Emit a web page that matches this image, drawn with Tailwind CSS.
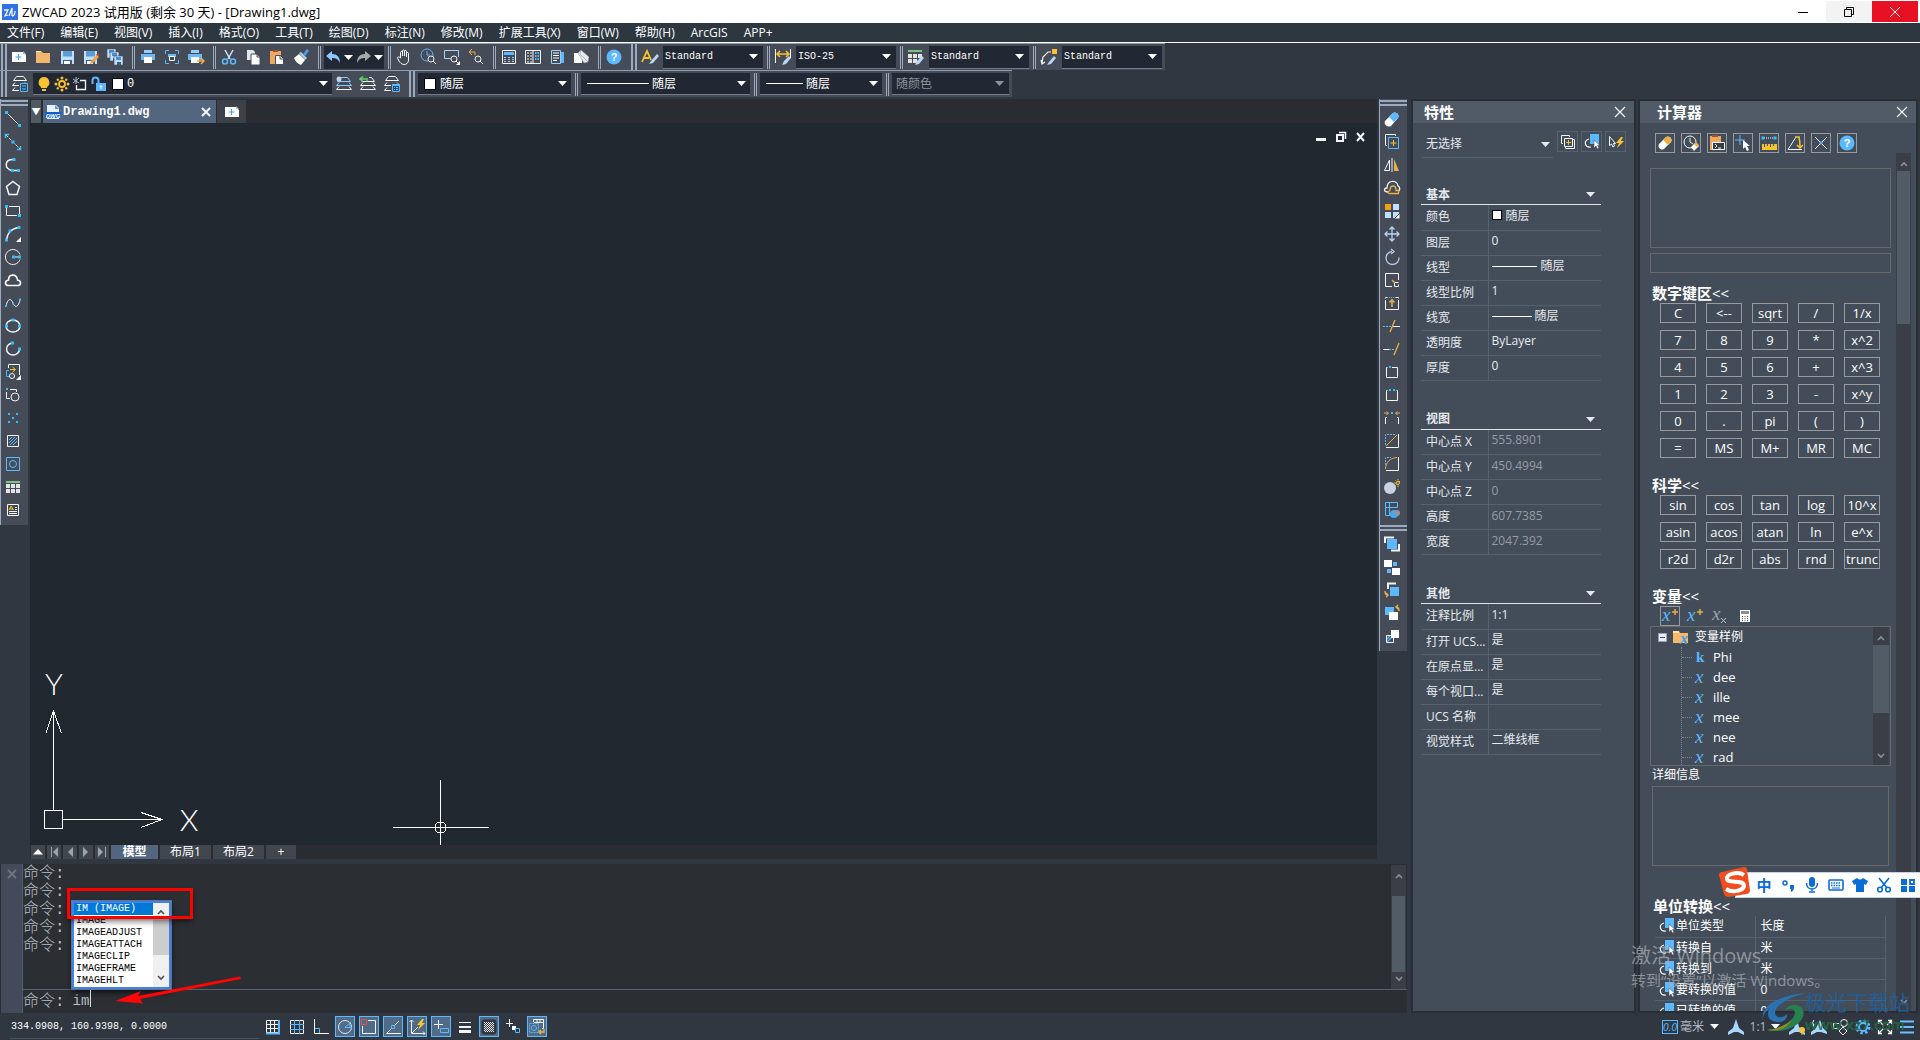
<!DOCTYPE html>
<html lang="zh-CN">
<head>
  <meta charset="UTF-8">
  <title>ZWCAD 2023</title>
  <script src="https://cdn.jsdelivr.net/npm/@tailwindcss/browser@4"></script>
</head>
<body class="relative h-screen flex flex-col overflow-hidden bg-[#303741] text-white text-xs font-['Open_Sans','Noto_Sans_CJK_SC',sans-serif]">

  <!-- Title bar -->
  <header class="h-[23px] shrink-0 flex items-center bg-white text-black">
    <span class="w-[22px] pl-0.5 flex" data-icon="logo"></span>
    <h1 class="flex-1 text-[13px] leading-5">ZWCAD 2023 试用版 (剩余 30 天) - [Drawing1.dwg]</h1>
    <button aria-label="最小化" class="w-[46px] h-[21px] flex items-center justify-center" data-icon="winMin"></button>
    <button aria-label="还原" class="w-[46px] h-[21px] flex items-center justify-center bg-[#f3f3f3]" data-icon="winRestore"></button>
    <button aria-label="关闭" class="w-[46px] h-[21px] mr-0.5 flex items-center justify-center bg-[#e81123]" data-icon="winClose"></button>
  </header>

  <!-- Menu -->
  <nav class="h-5 shrink-0 flex items-center gap-4 pl-[7px] bg-[#2d3740] border-b border-white whitespace-nowrap">
    <a href="#">文件(F)</a>
    <a href="#">编辑(E)</a>
    <a href="#">视图(V)</a>
    <a href="#">插入(I)</a>
    <a href="#">格式(O)</a>
    <a href="#">工具(T)</a>
    <a href="#">绘图(D)</a>
    <a href="#">标注(N)</a>
    <a href="#">修改(M)</a>
    <a href="#">扩展工具(X)</a>
    <a href="#">窗口(W)</a>
    <a href="#">帮助(H)</a>
    <a href="#">ArcGIS</a>
    <a href="#">APP+</a>
  </nav>

  <!-- Standard toolbar -->
  <div class="h-[27px] shrink-0 flex">
    <div class="flex items-center bg-[#454c57] border-t border-[#8f9db0] pr-[3px]">
      <div class="w-[7px] h-full flex gap-0.5 pl-px"><i class="w-0.5 bg-[#9aabc0]"></i><i class="w-0.5 bg-[#9aabc0]"></i></div>
      <div class="flex" data-tools="new open save saveAs saveAll"></div>
      <div class="w-[9px] h-[23px] flex justify-end gap-px pr-px"><i class="w-px bg-[#9aabc0]"></i><i class="w-px bg-[#9aabc0]"></i></div>
      <div class="flex" data-tools="print preview publish"></div>
      <div class="w-[9px] h-[23px] flex justify-end gap-px pr-px"><i class="w-px bg-[#9aabc0]"></i><i class="w-px bg-[#9aabc0]"></i></div>
      <div class="flex" data-tools="cut copy paste brush"></div>
      <div class="w-[9px] h-[23px] flex justify-end gap-px pr-px"><i class="w-px bg-[#9aabc0]"></i><i class="w-px bg-[#9aabc0]"></i></div>
      <div class="ml-0.5 w-[60px] h-[23px] flex items-center justify-around bg-[#222833]">
        <button aria-label="放弃" data-icon="undo"></button>
        <button aria-label="放弃列表" data-icon="down"></button>
        <button aria-label="重做" data-icon="redo"></button>
        <button aria-label="重做列表" data-icon="down"></button>
      </div>
      <div class="w-2 h-[23px] flex justify-end gap-px pr-px"><i class="w-px bg-[#9aabc0]"></i><i class="w-px bg-[#9aabc0]"></i></div>
      <div class="flex" data-tools="hand zoomTime zoomWin zoomPrev"></div>
      <div class="w-[9px] h-[23px] flex justify-end gap-px pr-px"><i class="w-px bg-[#9aabc0]"></i><i class="w-px bg-[#9aabc0]"></i></div>
      <div class="flex" data-tools="calc palette props erasePage"></div>
      <div class="w-[9px] h-[23px] flex justify-end gap-px pr-px"><i class="w-px bg-[#9aabc0]"></i><i class="w-px bg-[#9aabc0]"></i></div>
      <div class="flex" data-tools="help"></div>
      <div class="ml-[5px] h-full flex gap-0.5"><i class="w-0.5 bg-[#9aabc0]"></i><i class="w-0.5 bg-[#9aabc0]"></i></div>
      <div class="w-[26px] flex justify-center" data-icon="textStyle"></div>
      <label class="w-[100px] h-[23px] flex items-center pl-0.5 pr-[5px] bg-[#222833] border-b border-[#737c88]">
        <select aria-label="文字样式" class="flex-1 min-w-0 appearance-none font-['Liberation_Mono',monospace] text-[10px]"><option>Standard</option></select><i data-icon="down"></i>
      </label>
      <div class="w-[7px] h-[23px] flex justify-end gap-px"><i class="w-px bg-[#9aabc0]"></i><i class="w-px bg-[#9aabc0]"></i></div>
      <div class="w-[26px] flex justify-center" data-icon="dimStyle"></div>
      <label class="w-[100px] h-[23px] flex items-center pl-0.5 pr-[5px] bg-[#222833] border-b border-[#737c88]">
        <select aria-label="标注样式" class="flex-1 min-w-0 appearance-none font-['Liberation_Mono',monospace] text-[10px]"><option>ISO-25</option></select><i data-icon="down"></i>
      </label>
      <div class="w-[7px] h-[23px] flex justify-end gap-px"><i class="w-px bg-[#9aabc0]"></i><i class="w-px bg-[#9aabc0]"></i></div>
      <div class="w-[26px] flex justify-center" data-icon="tableStyle"></div>
      <label class="w-[100px] h-[23px] flex items-center pl-0.5 pr-[5px] bg-[#222833] border-b border-[#737c88]">
        <select aria-label="表格样式" class="flex-1 min-w-0 appearance-none font-['Liberation_Mono',monospace] text-[10px]"><option>Standard</option></select><i data-icon="down"></i>
      </label>
      <div class="w-[7px] h-[23px] flex justify-end gap-px"><i class="w-px bg-[#9aabc0]"></i><i class="w-px bg-[#9aabc0]"></i></div>
      <div class="w-[26px] flex justify-center" data-icon="leaderStyle"></div>
      <label class="w-[100px] h-[23px] flex items-center pl-0.5 pr-[5px] bg-[#222833] border-b border-[#737c88]">
        <select aria-label="多重引线样式" class="flex-1 min-w-0 appearance-none font-['Liberation_Mono',monospace] text-[10px]"><option>Standard</option></select><i data-icon="down"></i>
      </label>
    </div>
  </div>

  <!-- Layer toolbar -->
  <div class="h-[27px] mb-0.5 shrink-0 flex">
    <div class="flex items-center bg-[#454c57] border-t border-[#8f9db0] pr-[3px]">
      <div class="w-[7px] h-full flex gap-0.5 pl-px"><i class="w-0.5 bg-[#9aabc0]"></i><i class="w-0.5 bg-[#9aabc0]"></i></div>
      <div class="w-[26px] flex justify-center" data-icon="layers"></div>
      <label class="w-[299px] h-[22px] flex items-center gap-0.5 pl-[3px] pr-1 bg-[#222833] border-b border-[#737c88]">
        <i data-icon="bulb"></i><i data-icon="sun"></i><i data-icon="freeze"></i><i data-icon="lock"></i>
        <i class="size-3 ml-1 mr-px bg-white border border-black"></i>
        <select aria-label="图层" class="flex-1 min-w-0 appearance-none font-['Liberation_Mono',monospace] text-xs"><option>0</option></select><i data-icon="down"></i>
      </label>
      <div class="flex" data-tools="layerCur layerPrev layerState"></div>
      <div class="ml-[5px] h-full flex gap-0.5"><i class="w-0.5 bg-[#9aabc0]"></i><i class="w-0.5 bg-[#9aabc0]"></i></div>
      <label class="ml-[3px] w-[153px] h-[22px] flex items-center gap-1 pl-1.5 pr-1 bg-[#222833] border-b border-[#737c88]">
        <i class="size-3 bg-white border border-black"></i>
        <select aria-label="颜色" class="flex-1 min-w-0 appearance-none"><option>随层</option></select><i data-icon="down"></i>
      </label>
      <div class="w-[7px] h-[23px] flex justify-end gap-px"><i class="w-px bg-[#9aabc0]"></i><i class="w-px bg-[#9aabc0]"></i></div>
      <label class="ml-[3px] w-[169px] h-[22px] flex items-center gap-[3px] pl-1.5 pr-1 bg-[#222833] border-b border-[#737c88]">
        <i class="w-[62px] h-px bg-white"></i>
        <select aria-label="线型" class="flex-1 min-w-0 appearance-none"><option>随层</option></select><i data-icon="down"></i>
      </label>
      <div class="w-[7px] h-[23px] flex justify-end gap-px"><i class="w-px bg-[#9aabc0]"></i><i class="w-px bg-[#9aabc0]"></i></div>
      <label class="ml-[3px] w-[122px] h-[22px] flex items-center gap-[3px] pl-1.5 pr-1 bg-[#222833] border-b border-[#737c88]">
        <i class="w-[37px] h-px bg-white"></i>
        <select aria-label="线宽" class="flex-1 min-w-0 appearance-none"><option>随层</option></select><i data-icon="down"></i>
      </label>
      <div class="w-[7px] h-[23px] flex justify-end gap-px"><i class="w-px bg-[#9aabc0]"></i><i class="w-px bg-[#9aabc0]"></i></div>
      <label class="ml-[3px] w-[117px] h-[22px] flex items-center pl-1 pr-[5px] bg-[#222833] border-b border-[#737c88] text-[#8d939c]">
        <select aria-label="打印样式" class="flex-1 min-w-0 appearance-none"><option>随颜色</option></select><i data-icon="down"></i>
      </label>
    </div>
  </div>

  <main class="flex-1 min-h-0 flex gap-0.5 pr-0.5">
    <div class="flex-1 min-w-0 flex flex-col pr-0.5">
      <div class="flex-1 min-h-0 flex gap-0.5">

        <!-- Draw toolbar -->
        <div class="w-7 self-start bg-[#454c57] border-l border-[#9aabc0] pb-1">
          <div class="pt-px flex flex-col gap-0.5"><i class="h-0.5 bg-[#9aabc0]"></i><i class="h-0.5 bg-[#9aabc0]"></i></div>
          <div class="pt-px flex flex-col" data-side="line xline pline polygon rect arc circle cloud spline ellipse ellipseArc insert block point hatch region table mtext"></div>
        </div>

        <!-- Drawing area -->
        <section class="flex-1 min-w-0 flex flex-col bg-[#2a2c31]">
          <div class="h-6 pt-px shrink-0 flex gap-0.5 pl-px">
            <button aria-label="文档列表" class="w-2.5 bg-[#505a63] flex items-center justify-center text-[9px]">▼</button>
            <div class="w-[173px] flex items-center gap-0.5 pl-0.5 pr-1 bg-[#536680] font-['Liberation_Mono',monospace] font-bold">
              <i data-icon="dwg"></i><span class="flex-1">Drawing1.dwg</span><button aria-label="关闭图纸" data-icon="tabClose"></button>
            </div>
            <button aria-label="新建图纸" class="-ml-px w-[29px] flex items-center justify-center bg-[#3b4049]" data-icon="new"></button>
          </div>
          <div class="relative flex-1 min-h-0 bg-[#222830] overflow-hidden">
            <div class="absolute top-1.5 right-2 flex gap-1">
              <button aria-label="最小化图纸" data-icon="docMin"></button>
              <button aria-label="还原图纸" data-icon="docRestore"></button>
              <button aria-label="关闭图纸窗口" data-icon="docClose"></button>
            </div>
            <svg class="absolute left-0 bottom-0" width="480" height="180" viewBox="0 0 480 180" fill="none" stroke="#fff" shape-rendering="crispEdges">
              <path d="M14.500 145.500h18v18h-18zM23.500 145V46M33 154.500h99"/>
              <path d="M16 68L23.500 46L31.500 68M111 147.500L132 154.500L111 162.500"/>
              <path d="M410.500 115v42M410.500 168v12M363 162.500h42M416 162.500h43M405.500 159.500l2-2h6l2 2v6l-2 2h-6l-2-2zM410.500 157v11M405 162.500h11"/>
              <text x="24" y="30" text-anchor="middle" class="font-['Lato'] font-light text-[30px]" fill="#fff" stroke="none">Y</text>
              <text x="159" y="166" text-anchor="middle" class="font-['Lato'] font-light text-[30px]" fill="#fff" stroke="none">X</text>
            </svg>
          </div>
          <div class="h-3.5 shrink-0 flex gap-0.5 pl-px leading-3">
            <button aria-label="展开" class="w-3.5 bg-[#41464f] flex items-center justify-center" data-icon="navUp"></button>
            <button aria-label="第一个" class="w-3.5 bg-[#41464f] flex items-center justify-center" data-icon="navFirst"></button>
            <button aria-label="上一个" class="w-3.5 bg-[#41464f] flex items-center justify-center" data-icon="navPrev"></button>
            <button aria-label="下一个" class="w-3.5 bg-[#41464f] flex items-center justify-center" data-icon="navNext"></button>
            <button aria-label="最后一个" class="w-3.5 bg-[#41464f] flex items-center justify-center" data-icon="navLast"></button>
            <button class="w-[47px] bg-[#536680] font-bold">模型</button>
            <button class="w-[51px] bg-[#41464f]">布局1</button>
            <button class="w-[51px] bg-[#41464f]">布局2</button>
            <button class="w-[30px] bg-[#41464f]">+</button>
          </div>
        </section>

        <!-- Modify toolbar -->
        <div class="w-7 self-start bg-[#454c57] border-l border-[#9aabc0] pb-1">
          <div class="pt-px flex flex-col gap-0.5"><i class="h-0.5 bg-[#9aabc0]"></i><i class="h-0.5 bg-[#9aabc0]"></i></div>
          <div class="pt-px flex flex-col" data-side="erase copyObj mirror offset array move rotate scale stretch trim extend breakPt breakTwo join chamfer fillet explode blockEdit"></div>
          <div class="pt-1 flex flex-col gap-0.5"><i class="h-0.5 bg-[#9aabc0]"></i><i class="h-0.5 bg-[#9aabc0]"></i></div>
          <div class="flex flex-col pt-px" data-side="front back above under hatchBack"></div>
        </div>
      </div>

      <!-- Command window -->
      <section class="relative mt-[5px] h-[149px] shrink-0 flex bg-[#2b2e33] pl-px text-[#b9bec6]">
        <div class="w-[22px] shrink-0 bg-[#434b5a] border-r border-[#56616d] flex justify-center pt-1 text-[#6c7480]"><button aria-label="关闭命令行" class="h-3" data-icon="cmdClose"></button></div>
        <div class="flex-1 min-w-0 flex flex-col text-base font-['Liberation_Mono','Noto_Sans_CJK_SC',monospace]">
          <div class="flex-1 min-h-0 flex">
            <div class="flex-1 pt-px leading-[18px] font-light">
              <p>命令:</p>
              <p>命令:</p>
              <p>命令:</p>
              <p>命令:</p>
              <p>命令:</p>
            </div>
            <div class="w-[15px] mt-px mr-px bg-[#3b3e46] flex flex-col items-center px-px text-[#8a919b]">
              <i class="h-[31px] pt-2" data-icon="chevUp"></i>
              <i class="w-full flex-1 bg-[#525c67]"></i>
              <i class="h-[17px] pt-1" data-icon="chevDown"></i>
            </div>
          </div>
          <label class="h-6 flex items-center gap-2 border-t border-[#56616d] font-light">命令:<input aria-label="命令" value="im" class="flex-1 text-[14px] outline-none"></label>
        </div>

        <!-- Suggestions -->
        <div class="absolute left-[71px] top-9 w-[101px] h-[90px] border border-[#6b7078] bg-[#3b82f6] p-0.5 shadow-md shadow-black/50">
          <div class="h-full flex bg-white text-black font-['Liberation_Mono',monospace] text-[10px] leading-3">
            <ul class="flex-1 overflow-hidden">
              <li class="h-3 pl-0.5 bg-[#0078d7] text-white whitespace-pre">IM (IMAGE)</li>
              <li class="pl-0.5">IMAGE</li>
              <li class="pl-0.5">IMAGEADJUST</li>
              <li class="pl-0.5">IMAGEATTACH</li>
              <li class="pl-0.5">IMAGECLIP</li>
              <li class="pl-0.5">IMAGEFRAME</li>
              <li class="pl-0.5">IMAGEHLT</li>
            </ul>
            <div class="w-4 bg-[#f0f0f0] flex flex-col items-center text-[#505050]">
              <i class="h-[17px] pt-1.5" data-icon="chevUp"></i>
              <i class="w-full h-[35px] bg-[#cdcdcd]"></i>
              <i class="mt-auto h-4 pt-1" data-icon="chevDown"></i>
            </div>
          </div>
        </div>
        <i class="absolute left-[90px] top-[126px] w-px h-[17px] bg-[#d5d8dc]"></i>
        <div class="absolute left-[67px] top-6 w-[126px] h-[31px] border-3 border-[#ff0000] shadow-md shadow-black/40"></div>
        <svg class="absolute left-[113px] top-[110px]" width="132" height="34" viewBox="0 0 132 34" fill="#ff0505"><path d="M2 27L28 17L25 22L127 2.500L128 5L27 25L30 29.500Z"/></svg>
      </section>
    </div>

    <!-- Properties -->
    <aside class="w-[225px] shrink-0 flex flex-col border-2 border-[#2a2d33] bg-[#434d59] text-[#e6eaee]">
      <div class="h-[22px] shrink-0 flex items-center pl-[11px] pr-2 bg-[#505b67] text-white">
        <h2 class="flex-1 text-[15px] leading-5 font-bold">特性</h2><button aria-label="关闭特性" data-icon="close"></button>
      </div>
      <div class="pt-2 pl-[9px] pr-2 flex gap-[3px]">
        <label class="flex-1 mr-px h-[27px] flex items-center pl-1 pr-[3px] border-b border-[#56616d]">
          <select aria-label="选择" class="flex-1 min-w-0 appearance-none"><option>无选择</option></select><i data-icon="down"></i>
        </label>
        <button aria-label="切换 PICKADD" class="size-[21px] flex items-center justify-center border border-[#56616d]" data-icon="pickAdd"></button>
        <button aria-label="选择对象" class="size-[21px] flex items-center justify-center border border-[#56616d]" data-icon="pick"></button>
        <button aria-label="快速选择" class="size-[21px] flex items-center justify-center border border-[#56616d]" data-icon="quick"></button>
      </div>
      <div id="props" class="pl-2 pr-[33px]"></div>
    </aside>

    <!-- Calculator -->
    <aside class="w-[280px] shrink-0 flex flex-col border-2 border-[#2a2d33] bg-[#434d59]">
      <div class="h-[22px] shrink-0 flex items-center pl-[17px] pr-2 bg-[#505b67]">
        <h2 class="flex-1 text-[15px] leading-5 font-bold">计算器</h2><button aria-label="关闭计算器" data-icon="close"></button>
      </div>
      <div class="flex-1 min-h-0 flex pr-[5px]">
        <div class="flex-1 min-w-0 pt-2.5 pl-2.5 pr-[5px] overflow-hidden">
          <div id="calcTools" class="flex gap-1.5 pl-[5px]"></div>
          <textarea aria-label="历史" class="block mt-[15px] w-full h-20 resize-none border border-[#68686a]"></textarea>
          <input aria-label="表达式" class="block mt-[5px] w-full h-5 border border-[#68686a]">
          <h3 class="mt-2.5 h-5 pl-0.5 text-[15px] leading-5 font-bold">数字键区<span class="font-normal">&lt;&lt;</span></h3>
          <div class="grid grid-cols-5 gap-x-2.5 gap-y-[7px] pl-2.5 pr-[11px]" data-keys="C <-- sqrt / 1/x 7 8 9 * x^2 4 5 6 + x^3 1 2 3 - x^y 0 . pi ( ) = MS M+ MR MC"></div>
          <h3 class="mt-[17px] h-5 pl-0.5 text-[15px] leading-5 font-bold">科学<span class="font-normal">&lt;&lt;</span></h3>
          <div class="grid grid-cols-5 gap-x-2.5 gap-y-[7px] pl-2.5 pr-[11px]" data-keys="sin cos tan log 10^x asin acos atan ln e^x r2d d2r abs rnd trunc"></div>
          <h3 class="mt-[17px] h-5 pl-0.5 text-[15px] leading-5 font-bold">变量<span class="font-normal">&lt;&lt;</span></h3>
          <div class="flex gap-[5px] pl-2.5">
            <button aria-label="新建变量" class="size-5 flex items-center justify-center border border-[#9a9a9c]" data-icon="varNew"></button>
            <button aria-label="编辑变量" class="size-5 flex items-center justify-center" data-icon="varNew"></button>
            <button aria-label="删除变量" class="size-5 flex items-center justify-center" data-icon="varDel"></button>
            <button aria-label="计算器" class="size-5 flex items-center justify-center" data-icon="calcMini"></button>
          </div>
          <div class="h-[140px] flex border border-[#68686a] overflow-hidden">
            <ul class="flex-1 leading-5">
              <li class="flex items-center gap-1.5 pl-[7px]"><i data-icon="minus"></i><i data-icon="folderX"></i>变量样例</li>
              <li>
                <ul id="vars" class="ml-[30px] border-l border-dotted border-[#7b838d]"></ul>
              </li>
            </ul>
            <div class="w-4 mr-px bg-[#3b3e46] flex flex-col items-center text-[#8a919b]">
              <i class="h-[18px] pt-2" data-icon="chevUp"></i>
              <i class="w-full h-[68px] bg-[#525c67]"></i>
              <i class="mt-auto h-4 pt-1" data-icon="chevDown"></i>
            </div>
          </div>
          <label for="detail" class="block h-5 pl-0.5 leading-[18px]">详细信息</label>
          <div class="px-0.5"><textarea id="detail" class="block w-full h-20 resize-none border border-[#68686a]"></textarea></div>
          <h3 class="mt-[30px] h-5 pl-[3px] text-[15px] leading-5 font-bold">单位转换<span class="font-normal">&lt;&lt;</span></h3>
          <div class="pl-[5px] pr-[5px]">
            <table class="w-full border-r border-[#56616d]"><tbody id="units"></tbody></table>
          </div>
        </div>
        <div class="w-[15px] mt-[30px] bg-[#3b3e46] flex flex-col items-center px-px text-[#8a919b]">
          <i class="h-[18px] pt-2" data-icon="chevUp"></i>
          <i class="w-full h-[153px] bg-[#525c67]"></i>
          <i class="mt-auto h-4 pt-1" data-icon="chevDown"></i>
        </div>
      </div>
    </aside>
  </main>

  <!-- Status bar -->
  <footer class="h-[27px] shrink-0 flex items-center bg-[#303741]">
    <div class="w-[259px] h-[25px] pl-2.5"><output class="block h-full pt-1.5 pl-px border-b border-[#4a525d] font-['Liberation_Mono',monospace] text-[10px]">334.0908, 160.9398, 0.0000</output></div>
    <div id="modes" class="flex-1 flex gap-1 pl-1"></div>
    <div class="flex items-center pr-0.5 text-[#b4bac2]">
      <i class="w-5 flex justify-center" data-icon="units"></i>
      <span class="w-7">毫米</span>
      <button aria-label="单位列表" class="w-3 mr-[5px] text-white flex justify-center" data-icon="down"></button>
      <button aria-label="注释比例" class="w-[22px] flex justify-center" data-icon="annot"></button>
      <span class="w-[22px] text-center">1:1</span>
      <button aria-label="比例列表" class="w-3 mr-[5px] text-white flex justify-center" data-icon="down"></button>
      <div id="tray" class="flex"></div>
    </div>
  </footer>

  <!-- Activation notice -->
  <div class="absolute left-[1631px] top-[942px] text-[#b0b4b9]/70 pointer-events-none whitespace-nowrap">
    <p class="text-[20px] leading-7">激活 Windows</p>
    <p class="text-[15px] leading-5">转到“设置”以激活 Windows。</p>
  </div>

  <!-- Download site mark -->
  <div class="absolute right-2.5 bottom-1.5 flex items-center pointer-events-none whitespace-nowrap">
    <svg class="-mr-1" width="48" height="42" viewBox="0 0 48 42" fill="none">
      <path d="M2 29C-2 16 18 4 45 2C28 6 14 14 14 22C14 27 22 28 26 23C27 33 12 33 8 27C6 24 7 20 9 17C4 21 1 25 2 29Z" fill="#2a72b4"/>
      <path d="M14 40C32 41 48 27 41 17C37 12 27 14 24 19C31 16 36 19 33 25C30 32 20 37 6 39Z" fill="#27804e"/>
      <path d="M6 39C16 38 26 34 31 28C27 38 16 41 6 39Z" fill="#8c8a28"/>
    </svg>
    <div>
      <p class="text-[21px] leading-6 text-[#1f5f9e]/90">极光下载站</p>
      <p class="text-[15px] leading-5 font-semibold text-[#1f7048]/90">www.xz7.com</p>
    </div>
  </div>

  <!-- Input method bar -->
  <div class="absolute right-0 top-[868px] h-[30px] flex items-end">
    <svg class="relative z-10 -mr-4" width="32" height="31" viewBox="0 0 32 31">
      <path d="M3 5L25 0Q28 0 28 3L31 23Q31 26 28 27L9 30Q6 30 5 27L0 8Q0 5 3 5Z" fill="#f04e1f"/>
      <path d="M25 8C19 4 7 7 8 12C9 17 25 12 25 19C24 24 13 26 7 22" fill="none" stroke="#fff" stroke-width="4"/>
    </svg>
    <div class="h-[26px] flex items-center pl-4 bg-white border border-r-0 border-[#c3d2ee] text-[#0a6cd6]">
      <button class="w-6 text-[15px] font-bold">中</button>
      <button aria-label="标点" class="w-6 flex justify-center" data-icon="punct"></button>
      <button aria-label="语音" class="w-6 flex justify-center" data-icon="mic"></button>
      <button aria-label="软键盘" class="w-6 flex justify-center" data-icon="keyboard"></button>
      <button aria-label="皮肤" class="w-6 flex justify-center" data-icon="shirt"></button>
      <button aria-label="截图" class="w-6 flex justify-center" data-icon="scissors"></button>
      <button aria-label="工具箱" class="w-6 flex justify-center" data-icon="boxes"></button>
    </div>
  </div>

  <script>
    const B = "#5cb8ff", C = "#33bfff", W = "#f4f6f8", Y = "#f7c331", O = "#e9b04a";
    // small square grip centred on x, y
    const grip = (x, y, c = C) => `<path d="M${x - 1.5} ${y - 1.5}h3v3h-3z" fill="${c}" stroke="none"/>`;
    const dot = (x, y) => `<path d="M${x - 1} ${y - 1}h2v2h-2z" fill="${C}" stroke="none"/>`;
    const mag = (x, y) => `<circle cx="${x}" cy="${y}" r="3"/><path d="M${x + 2} ${y + 2}l3 3"/>`;
    const disk = (x, y, s) => `<path d="M${x} ${y}h${s}v${s}h-${s}z" fill="#bfe0ff" stroke="none"/><path d="M${x + 2} ${y}h${s - 4}v${s / 2 - 1}h-${s - 4}z" fill="#5c9bd6" stroke="none"/><path d="M${x + 2} ${y + s - 4}h${s - 4}v4h-${s - 4}z" fill="#3e5f80" stroke="none"/><path d="M${x + 3} ${y + s - 3}h${s - 7}v3h-${s - 7}z" fill="#fff" stroke="none"/>`;
    const diskSmall = (x, y) => `<path d="M${x} ${y}h9v9h-9z" fill="#bfe0ff" stroke="#454c57" stroke-width=".6"/><path d="M${x + 2} ${y + 1}h5v3h-5z" fill="#4c8fd0" stroke="none"/><path d="M${x + 3} ${y + 6}h4v3h-4z" fill="#3e5f80" stroke="none"/>`;
    const printer = `<path d="M4 1h8v3H4z" fill="#8fd0ff" stroke="none"/><path d="M1 5h14v6H1z" fill="#6fb7f0" stroke="none"/><path d="M4 8h8v6H4z" fill="#fff" stroke="none"/>`;
    const cursor = (x, y) => `<path d="M${x} ${y}v8l2-2 1.500 3 1.500-1-1.500-2.500h2.500z" fill="#fff" stroke="#434d59" stroke-width=".5"/>`;

    // each icon: [width, height, markup], default stroke is white
    const icons = {
      logo: [16, 16, `<path d="M0 0h16v16H0z" fill="#2f6fe8" stroke="none"/><path d="M2 6h4l-3 6 3-1M7 12l3-8v8M10 12c3 0 3-3 3-5" stroke-width="1.300"/>`],
      winMin: [12, 12, `<path d="M1 6.500h10" stroke="#000"/>`],
      winRestore: [12, 12, `<path d="M1.500 3.500h7v7h-7zM3.500 3.500v-2h7v7h-2" stroke="#000"/>`],
      winClose: [12, 12, `<path d="M1 1l10 10M11 1L1 11"/>`],
      close: [12, 12, `<path d="M1 1l10 10M11 1L1 11" stroke-width="1.200"/>`],
      down: [9, 5, `<path d="M0 0h9L4.500 5z" fill="currentColor" stroke="none"/>`],
      chevUp: [8, 6, `<path d="M1 5l3-3 3 3" stroke="currentColor" stroke-width="1.600"/>`],
      chevDown: [8, 6, `<path d="M1 1l3 3 3-3" stroke="currentColor" stroke-width="1.600"/>`],
      cmdClose: [10, 10, `<path d="M1 1l8 8M9 1L1 9" stroke="currentColor" stroke-width="2"/>`],
      tabClose: [12, 12, `<path d="M2 2l8 8M10 2l-8 8" stroke-width="2"/>`],
      docMin: [16, 16, `<path d="M3 10.500h10" stroke-width="3"/>`],
      docRestore: [16, 16, `<path d="M4 6h6v6H4z" stroke-width="2"/><path d="M6 3.500h6.500V10" stroke-width="1.500"/>`],
      docClose: [16, 16, `<path d="M4 4l7 8M11 4l-7 8" stroke-width="2"/>`],
      navUp: [10, 6, `<path d="M0 5.500h10L5 0z" fill="#fff" stroke="none"/>`],
      navFirst: [10, 10, `<path d="M2.500 0v10" stroke="#9aa3ae"/><path d="M9 0v10L4 5z" fill="#9aa3ae" stroke="none"/>`],
      navPrev: [10, 10, `<path d="M8 0v10L3 5z" fill="#9aa3ae" stroke="none"/>`],
      navNext: [10, 10, `<path d="M2 0v10l5-5z" fill="#9aa3ae" stroke="none"/>`],
      navLast: [10, 10, `<path d="M8.500 0v10" stroke="#9aa3ae"/><path d="M1 0v10l5-5z" fill="#9aa3ae" stroke="none"/>`],
      dwg: [16, 16, `<path d="M2 1h9l3 3v11H2z" fill="#e8f2fc" stroke="none"/><path d="M10 1l4 4h-4z" fill="#5b9bd5" stroke="none"/><path d="M0 8h16v6H0z" fill="#0f5fd0" stroke="none"/><text x="8" y="13.500" text-anchor="middle" fill="#fff" stroke="none" class="font-['Liberation_Sans'] text-[6px] font-bold">DWG</text>`],

      new: [16, 16, `<path d="M1 3h11l3 3v7H1z" fill="#fff" stroke="none"/><path d="M12 2l3 3h-3z" fill="#9cc4ea" stroke="none"/><path d="M7.500 5v6M4.500 8h6" stroke="#3aa0f0"/>`],
      open: [16, 16, `<path d="M1 2h5l2 2h7v10H1z" fill="#f0b76c" stroke="none"/><path d="M1 2h5v1H1z" fill="#ffe2a8" stroke="none"/>`],
      save: [16, 16, disk(2, 2, 13)],
      saveAs: [16, 16, disk(1, 2, 13) + `<path d="M7 15l1-3 6-6 2 2-6 6z" fill="#f6a13c" stroke="none"/><path d="M13 6l2-1 1 2" stroke="#e0422c"/>`],
      saveAll: [18, 18, diskSmall(1, 1) + diskSmall(4, 4) + diskSmall(8, 8)],
      print: [16, 16, printer],
      preview: [16, 16, `<path d="M1.500 5V1.500H5M11 1.500h3.500V5M14.500 11v3.500H11M5 14.500H1.500V11" stroke="${B}"/><path d="M4 5h8v3H4z" fill="#6fb7f0" stroke="none"/><path d="M5.500 7.500h5v4h-5z"/>`],
      publish: [18, 16, printer + `<path d="M10 12h7M14 9l3 3-3 3" stroke="${O}" stroke-width="1.500"/>`],
      cut: [16, 16, `<path d="M4 1l5 9M12 1L7 10" stroke="#cfe3f5" stroke-width="1.500"/><circle cx="4" cy="12.500" r="2.500" stroke="${B}" stroke-width="1.500"/><circle cx="12" cy="12.500" r="2.500" stroke="${B}" stroke-width="1.500"/>`],
      copy: [16, 16, `<path d="M2 1h6l2 2v8H2z" fill="#e3e8ee" stroke="none"/><path d="M6 5h6l3 3v8H6z" fill="#fff" stroke="#454c57"/><path d="M12 5v3h3" stroke="#454c57"/>`],
      paste: [16, 16, `<path d="M1 2h11v13H1z" fill="#f0a860" stroke="none"/><path d="M4 1h5v2H4z" fill="#a0522d" stroke="none"/><path d="M6.500 6.500h5l3 3v6h-8z" fill="#fff" stroke="#454c57"/><path d="M11 6v4h4" stroke="#454c57"/>`],
      brush: [16, 16, `<path d="M1 9l5-4 6 6-4 5c-3-1-6-4-7-7z" fill="#fff" stroke="none"/><path d="M6 4l2-1 6 6-2 2z" fill="#a9cdf0" stroke="none"/><path d="M10 5l4-5 2 2-4 5z" fill="#4f9be0" stroke="none"/>`],
      undo: [15, 12, `<path d="M0 5l6-5v3c5 0 8 3 8 9-2-4-4-5-8-5v3z" fill="#8cc8ff" stroke="none"/>`],
      redo: [15, 12, `<path d="M15 5L9 0v3C4 3 1 6 1 12c2-4 4-5 8-5v3z" fill="#a4a9b0" stroke="none"/>`],
      hand: [16, 16, `<path d="M4.500 9V3.500c0-1.500 2-1.500 2 0V7V2c0-1.500 2-1.500 2 0v5V2.500c0-1.500 2-1.500 2 0V8V4.500c0-1.500 2-1.500 2 0V11c0 3-2 4.500-4.500 4.500S4 13.500 3 12L1.500 9c0-1.500 2-1.500 3 0z"/>`],
      zoomTime: [18, 18, `<circle cx="8" cy="7" r="6" stroke="${B}"/><path d="M8 3v4h3" stroke="${B}"/><g fill="#454c57">${mag(12, 11)}</g>`],
      zoomWin: [18, 18, `<path d="M8 10.500H1.500v-8h14V9" stroke="#a9d3fa"/><g fill="#454c57">${mag(11, 11)}</g><path d="M17 13v4h-4z" fill="#fff" stroke="none"/>`],
      zoomPrev: [18, 18, `<path d="M2 4h6v3M5 1L2 4l3 3" stroke="${O}"/>${mag(11, 11)}`],
      calc: [16, 16, `<path d="M1.500 1.500h13v13h-13z"/><path d="M3 3h10v3H3z" fill="${B}" stroke="none"/><path d="M3 8.500h10M3 10.500h10M3 12.500h10" stroke-dasharray="2 2" stroke="#9ccffb"/>`],
      palette: [16, 16, `<path d="M.5 1.500h15v13H.5zM8 1v14"/><path d="M2 4h5M2 7h5M2 10h5M2 13h5" stroke-dasharray="2 1"/><path d="M10 4h4M10 7h4M10 10h4" stroke="${B}" stroke-width="2" stroke-dasharray="1.500 1"/>`],
      props: [16, 16, `<path d="M2.500 1.500h9v13h-9z" stroke="#9ccffb"/><path d="M4 4h6M4 6.500h6M4 9h6M4 11.500h4" stroke="#fff"/><path d="M12 3h3v11h-3z" fill="${B}" stroke="none"/>`],
      erasePage: [16, 16, `<path d="M1 4h6l2 3v7H1z" fill="#fff" stroke="none"/><path d="M5 4l3-3 8 7-1 5-4 1z" fill="#e6e9ed" stroke="#8e97a3" stroke-width=".6"/><path d="M8 1l-1 4 8 8" stroke="#8e97a3" stroke-width=".6"/>`],
      help: [16, 16, `<circle cx="8" cy="8" r="7.500" fill="${B}" stroke="none"/><text x="8" y="12" text-anchor="middle" fill="#fff" stroke="none" class="font-['Liberation_Sans'] text-[11px] font-bold">?</text>`],
      textStyle: [18, 16, `<path d="M1 13L6 2l4 9M3 9h5" stroke="${Y}" stroke-width="1.800"/><path d="M8 15l2-3 6-7 2 2-6 7z" fill="#b9d6f2" stroke="none"/>`],
      dimStyle: [18, 18, `<path d="M1.500 1v14M16.500 1v9"/><path d="M3 6h12M6 3L3 6l3 3M12 3l3 3-3 3" stroke="${Y}" stroke-width="1.500"/><path d="M8 17l2-4 5-5 2 2-5 6z" fill="#b9d6f2" stroke="none"/>`],
      tableStyle: [18, 16, `<path d="M1 1h14v2H1z" fill="#7cc47f" stroke="none"/><path d="M1 5h4v4H1zM6 5h4v4H6zM11 5h4v4h-4zM1 10h4v4H1zM6 10h4v4H6z" fill="#e2e2e2" stroke="none"/><path d="M8 16l2-4 5-5 2 2-5 6z" fill="#b9d6f2" stroke="none"/>`],
      leaderStyle: [18, 18, `<path d="M2 15l1-6 5-5h3M1 12l1 4 3-2" stroke-width="1.200"/><path d="M12 1h5v5h-5z" fill="${Y}" stroke="none"/><path d="M7 17l2-3 5-6 2 2-5 6z" fill="#b9d6f2" stroke="none"/>`],

      layers: [18, 18, `<path d="M5.500 1.500h7l3 4h-13zM4 7.500l-2.500 3H8M4 12.500l-2.500 3H8M14 7.500l1 1"/><path d="M9.500 8.500h7v8h-7z" fill="#2d4a66" stroke="${B}"/><path d="M11 11h4M11 14h4" stroke="${B}"/>`],
      bulb: [16, 16, `<path d="M8 1a5.500 5.500 0 0 1 3 10v1H5v-1A5.500 5.500 0 0 1 8 1z" fill="${Y}" stroke="none"/><path d="M6 14h4" stroke="${Y}" stroke-width="2"/>`],
      sun: [16, 16, `<circle cx="8" cy="8" r="3" stroke="${Y}" stroke-width="1.800"/><g fill="${Y}" stroke="none"><circle cx="8" cy="2" r="1.500"/><circle cx="8" cy="14" r="1.500"/><circle cx="2" cy="8" r="1.500"/><circle cx="14" cy="8" r="1.500"/><circle cx="3.800" cy="3.800" r="1.200"/><circle cx="12.200" cy="3.800" r="1.200"/><circle cx="3.800" cy="12.200" r="1.200"/><circle cx="12.200" cy="12.200" r="1.200"/></g>`],
      freeze: [16, 16, `<path d="M8 4.500h5.500v9h-9V9" stroke-width="1.300"/><path d="M4 1v7M1 3l6 4M7 2L1 7" stroke="#b5bbc3"/>`],
      lock: [16, 16, `<path d="M2.500 8V4.500c0-4 6-4 6 0V7" stroke="${B}" stroke-width="2"/><path d="M6 7h10v8H6z" fill="${B}" stroke="none"/><path d="M11 9v4M9.500 10.500h3"/>`],
      layerCur: [18, 16, `<path d="M5.500 1.500h7l3 4h-13z" stroke="#8cc8ff"/><path d="M4 6.500l-2.500 3h15l-2.500-3" stroke="#8cc8ff"/><path d="M4 10.500l-2.500 3h15l-2.500-3"/><circle cx="4" cy="3" r="2.500" fill="#c9d3de" stroke="none"/>`],
      layerPrev: [18, 16, `<path d="M10 1.500h2.500l3 4h-13M4 6.500l-2.500 3h15l-2.500-3M4 10.500l-2.500 3h15l-2.500-3"/><path d="M1 3h7v2.500M4 .5L1 3l3 2.500" stroke="#5fd06f" stroke-width="1.500"/>`],
      layerState: [18, 18, `<path d="M5.500 1.500h7l3 4h-13zM4 7.500l-2.500 3H8M4 12.500l-2.500 3H8M14 7.500l1 1"/><path d="M9.500 9.500h7v7h-7z" fill="#2d4a66" stroke="${B}"/><path d="M9 9h8v2H9z" fill="${B}" stroke="none"/><path d="M11 12.500h1M13 12.500h2M11 14.500h1M13 14.500h2" stroke="${B}"/>`],

      line: [18, 18, `<path d="M3 3l12 12"/>${grip(2.5, 2.5)}${grip(15.5, 15.5)}`],
      xline: [18, 18, `<path d="M2 2l14 14" stroke-dasharray="3 1.500"/><path d="M1.500 5V1.500H5M13 16.500h3.500V13" stroke="${C}" stroke-width="1.500"/>${grip(9, 9)}`],
      pline: [18, 18, `<path d="M10 3.500C0 3 0 13 8 14.500h7" stroke-width="1.500"/>${grip(10, 3.5)}${grip(8.5, 14.5)}${grip(14.5, 14.5)}`],
      polygon: [18, 18, `<path d="M9 2.500l6.500 5-2.500 8H5L2.500 7.500z" stroke-width="1.500"/>`],
      rect: [18, 18, `<path d="M5 4.500h10.500v8M13 13.500H2.500V6"/>${grip(2.5, 4.5)}${grip(15.5, 13.5)}`],
      arc: [18, 18, `<path d="M2.500 15C3 9 7 3.500 15 2.500" stroke-width="1.500"/>${grip(2.5, 15)}${grip(6, 6)}${grip(15, 2.5)}<path d="M17 12v5h-5z" fill="#fff" stroke="none"/>`],
      circle: [18, 18, `<path d="M16 6.500A7.500 7.500 0 1 0 16 11.500M9 9h7"/>${grip(9.5, 9)}${grip(15.5, 9)}`],
      cloud: [18, 18, `<path d="M4.500 14.500c-4 0-4-5 0-5.500 0-6 8-7 9 0 4 .5 4 5.500 0 5.500z" stroke-width="1.600"/>`],
      spline: [18, 18, `<path d="M2 12C4 4 7 4 9 9s5 5 7-3"/>${dot(2, 12)}${dot(9, 9.5)}${dot(16, 5.5)}`],
      ellipse: [18, 18, `<ellipse cx="9" cy="9" rx="7" ry="6" stroke-width="1.500"/>${grip(9, 3)}${grip(2.5, 9)}${grip(15.5, 9)}`],
      ellipseArc: [18, 18, `<path d="M9 3A6.500 6 0 1 0 15.500 9" stroke-width="1.500"/>${grip(8.5, 3)}${grip(15.5, 9)}`],
      insert: [18, 18, `<path d="M4.500 5V1.500h11V12M11 13.500h-1"/><path d="M6 6.500h5M8.500 4l3 2.500L8.500 9" stroke="${Y}"/><circle cx="8" cy="13" r="2.500"/><path d="M5 7.500H2.500v6H5" stroke="${C}"/><path d="M17 12v5h-5z" fill="#fff" stroke="none"/>`],
      block: [18, 18, `<path d="M6 3.500h6.500V6M2.500 6v6.500H6"/>${dot(3, 3)}<circle cx="11" cy="11" r="4"/>`],
      point: [18, 18, dot(5, 5) + dot(13, 5) + dot(9, 9) + dot(5, 13) + dot(13, 13)],
      hatch: [18, 18, `<path d="M3.500 3.500h11v11h-11z"/><path d="M5 8l3-3M5 11l6-6M6 13l7-7M9 13l4-4" stroke="${B}"/>`],
      region: [18, 18, `<path d="M2.500 2.500h13v13h-13z" stroke="${B}"/><circle cx="9" cy="9" r="3.500" stroke="${B}"/>`],
      table: [18, 18, `<path d="M2 3h14v2H2z" fill="#7cc47f" stroke="none"/><path d="M2 6h4v4H2zM7 6h4v4H7zM12 6h4v4h-4zM2 11h4v4H2zM7 11h4v4H7zM12 11h4v4h-4z" fill="#e4e4e4" stroke="none"/>`],
      mtext: [18, 18, `<path d="M3.500 3.500h11v11h-11zM11 6.500h2M11 8.500h2M5 10.500h8M5 12.500h8"/><path d="M5 9l2-4 2.500 4M6 8h3" stroke="${Y}"/>`],

      erase: [18, 18, `<path d="M2 11l8-8c3-2 7 2 5 5l-7 8c-3 2-8-2-6-5z" fill="#fff" stroke="none"/><path d="M6 7l4-4c3-2 7 2 5 5l-4 4z" fill="${B}" stroke="none"/>`],
      copyObj: [18, 18, `<path d="M4 12.500H2.500v-11h10V3"/><path d="M5.500 4.500h10v11h-10z" stroke="${B}"/><path d="M10.500 7v6M7.500 10h6" stroke="${Y}"/>`],
      mirror: [18, 18, `<path d="M6.500 4v10.500h-5z"/><path d="M9 2v14"/><path d="M11 3l5 12h-5z" fill="${O}" stroke="none"/>`],
      offset: [18, 18, `<path d="M5 13c-5 0-4-4-1-4 0-8 10-9 11-2 2 1 2 3 1 5" stroke-width="1.300"/><path d="M7 14.500c-3 0-2-2 0-3 0-6 6-6 6 0h2.500v3z" stroke="${O}" stroke-width="1.300"/>`],
      array: [18, 18, `<path d="M2 2h6v6H2z" fill="#f59e1b" stroke="none"/><path d="M10 2h6v6h-6zM2 10h6v6H2zM10 10h6v6h-6z" fill="#bfe0ff" stroke="none"/><path d="M17 11v6h-6z" fill="#fff" stroke="#454c57"/>`],
      move: [18, 18, `<path d="M9 2v14M2 9h14M6.500 4.500L9 2l2.500 2.500M6.500 13.500L9 16l2.500-2.500M4.500 6.500L2 9l2.500 2.500M13.500 6.500L16 9l-2.500 2.500" stroke="#b9d2f0" stroke-width="1.300"/>`],
      rotate: [18, 18, `<path d="M9 3.500A6.500 6.500 0 1 0 16 9.500M8 1l3 2.500L8 6" stroke="#b4cbea" stroke-width="1.300"/>`],
      scale: [18, 18, `<path d="M9 15.500H2.500v-13h13V9"/><path d="M9 9l3 3" stroke="${O}" stroke-width="1.500"/><path d="M12 11.500h3.500M11.500 12v3.500h4v-2"/>`],
      stretch: [18, 18, `<path d="M5 3.500H2.500v1M13 3.500h2.500v1M2.500 6v9.500h13V6"/><path d="M4 3.500h10" stroke="${B}" stroke-dasharray="1 1"/><path d="M9 13V6M6.500 8.500L9 6l2.500 2.500" stroke="${O}" stroke-width="1.600"/>`],
      trim: [18, 18, `<path d="M0 9.500h8" stroke="${B}" stroke-dasharray="2 1"/><path d="M10 9.500h7"/><path d="M12 3L7 15" stroke="${O}" stroke-width="1.300"/>`],
      extend: [18, 18, `<path d="M0 9.500h6"/><path d="M6 9.500h6" stroke="${B}" stroke-dasharray="2 1"/><path d="M16 3l-5 12" stroke="${O}" stroke-width="1.300"/>`],
      breakPt: [18, 18, `<path d="M4.500 4.500h-1v10h11v-10H9"/>${dot(7, 4)}`],
      breakTwo: [18, 18, `<path d="M4.500 4.500h-1v10h11v-10h-1"/>${dot(7, 4)}${dot(11, 4)}`],
      join: [18, 18, `<path d="M2.500 15V8.500H4M15.500 15V8.500H14"/><path d="M1 4h4M3.500 2.500L5.500 4 3.500 6M17 4h-4M14.500 2.500L12.500 4l2 2" stroke="${O}"/>${dot(9, 4)}`],
      chamfer: [18, 18, `<path d="M15.500 2v13.500H3"/><path d="M2.500 13V2.500H13" stroke="${B}" stroke-dasharray="2 1"/><path d="M3 14L14 3" stroke="${O}"/>`],
      fillet: [18, 18, `<path d="M15.500 2v13.500H3"/><path d="M2.500 10V2.500H8" stroke="${B}" stroke-dasharray="2 1"/><path d="M2.500 14C3 7 7 3 14 2.500" stroke="${O}"/>`],
      explode: [18, 18, `<circle cx="7" cy="10" r="6" fill="#c6d2e2" stroke="none"/><circle cx="15" cy="5" r="1.500" stroke="${Y}"/><path d="M15 1v1.500M15 7.500V9M11.500 5H13M12.500 2.500l1 1M17 3l-1 1M12.500 7.500l1-1" stroke="${Y}"/>`],
      blockEdit: [18, 18, `<path d="M9 14.500H2.500v-13h12v5h-12M6.500 1.500V15" stroke="${B}"/><circle cx="11" cy="13" r="4" fill="#3fa9f5" stroke="none"/><circle cx="14" cy="12" r="3" fill="#8c97a5" stroke="none"/>`],
      front: [18, 18, `<path d="M2 8V2.500h9M16 9v6.500H8" stroke-width="2"/><path d="M4 4h10v10H4z" fill="${B}" stroke="none"/>`],
      back: [18, 18, `<path d="M1 2h8v7H1zM9 10h8v7H9z" fill="#fff" stroke="none"/><path d="M10 4h4v4h-4zM4 11h4v4H4z" fill="${B}" stroke="none"/>`],
      above: [18, 18, `<path d="M5 8V2.500h8" stroke-width="2"/><path d="M7 6h9v9H7z" fill="${B}" stroke="none"/><path d="M2 10c0 3 1 4 3 4M3 12l2 2-2 2" stroke="${O}" stroke-width="1.500"/>`],
      under: [18, 18, `<path d="M2 3h9v8H2z" fill="${B}" stroke="none"/><path d="M6 8h9v8H6z" fill="#fff" stroke="none"/><path d="M16 7c0-3-1-4-3-4M15 1l-2 2 2 2" stroke="${O}" stroke-width="1.500"/>`],
      hatchBack: [18, 18, `<path d="M3.500 8.500h7v7h-7z"/><path d="M4 12l3-3M4 15l6-6" stroke="${B}" stroke-width="1.300"/><path d="M8 3h8v8H8z" fill="#fff" stroke="none"/>`],

      pickAdd: [16, 16, `<path d="M3 9.500H1.500v-8h8V3M12 5.500h2.500v9h-9V12"/><path d="M4.500 4.500h8v8h-8z"/><path d="M8.500 6v5M6 8.500h5" stroke="${Y}"/>`],
      pick: [16, 16, `<path d="M6 0h9v10H6z" fill="${B}" stroke="none"/><path d="M5 5C-1 7 1 14 7 13" stroke-width="1.200"/>${cursor(10, 6)}`],
      quick: [16, 16, `<path d="M1.500 2.500v9l2-1.500 1.500 3 1.500-1L5.500 9.500h2z"/><path d="M13 3L8 9h3l-2 5 7-7h-3l2-4z" fill="${Y}" stroke="none"/>`],
      eraser: [16, 16, `<path d="M2 9l7-7c3-2 7 2 5 5l-7 7c-3 2-7-2-5-5z" fill="#fff" stroke="none"/><path d="M6 5l3-3c3-2 7 2 5 5l-3 3z" fill="${O}" stroke="none"/>`],
      clearHist: [16, 16, `<circle cx="7" cy="7" r="6"/><path d="M7 3v4l3 2"/><path d="M8 12l4-4 4 3-5 5z" fill="#fff" stroke="none"/><path d="M11 9l2-2 3 3-2 2z" fill="${O}" stroke="none"/>`],
      pasteCmd: [16, 16, `<path d="M1 1h11v14H1z" fill="#f0a860" stroke="none"/><path d="M3 0h6v2H3z" fill="#a0522d" stroke="none"/><path d="M3.500 7.500h12v7h-12z" fill="#333c47"/><path d="M6 9l2 2-2 2M9 13h3"/>`],
      getPt: [16, 16, `<path d="M5 0v10M0 5h10" stroke="${B}"/><path d="M8 5v9l2-2 2 4 2-1-2-4h3z" fill="#fff" stroke="none"/>`],
      dist: [16, 16, `<path d="M3 3h10" stroke-dasharray="1 1"/>${grip(2, 3)}${grip(14, 3)}<path d="M1 9h15v6H1z" fill="${Y}" stroke="none"/><path d="M3.500 9v3M6.500 9v2M9.500 9v3M12.500 9v2" stroke="#434d59"/>`],
      angle: [16, 16, `<path d="M9 2L1 14.500h14"/><path d="M8 2h4c1 4 1 6 1 10M10 10l3 3 3-3" stroke="${Y}" stroke-width="1.500"/>`],
      inter: [16, 16, `<path d="M2 2l12 12M14 2L2 14"/><circle cx="8" cy="8" r="1.500" fill="${B}" stroke="none"/>`],
      varNew: [18, 18, `<text x="1" y="14" fill="${B}" stroke="none" class="font-['Liberation_Serif'] italic text-[19px]">x</text><path d="M14 2v6M11 5h6" stroke="${O}" stroke-width="1.500"/>`],
      varDel: [18, 18, `<text x="1" y="13" fill="#9aa1aa" stroke="none" class="font-['Liberation_Serif'] italic text-[19px]">x</text><path d="M10 11l5 5M15 11l-5 5" stroke="#c3c7cc"/>`],
      calcMini: [12, 14, `<path d="M1 1h10v12H1z" fill="#fff" stroke="none"/><path d="M2 2h8v3H2z" fill="#8a8f96" stroke="none"/><path d="M3 7.500h7M3 9.500h7M3 11.500h7" stroke="#555" stroke-dasharray="1 1.500"/>`],
      minus: [9, 9, `<path d="M.5 .5h8v8h-8z" fill="#e9edf1" stroke="#9aa1aa"/><path d="M2 4.500h5" stroke="#2b4f9e"/>`],
      folderX: [16, 16, `<path d="M0 2h6l1 2h8v10H0z" fill="#f6b96b" stroke="none"/><path d="M0 2h6v2H0z" fill="#ffe2a8" stroke="none"/><text x="7" y="15" fill="#3b9be8" stroke="none" class="font-['Liberation_Serif'] font-bold italic text-[16px]">x</text>`],

      grid: [16, 16, `<path d="M1.500 1.500h12v12h-12zM5.500 1v13M9.500 1v13M1 5.500h13M1 9.500h13"/><path d="M14 1v13.500H1" stroke="${B}" stroke-width="2"/>`],
      snap: [16, 16, `<path d="M1.500 1.500h13v13h-13z"/><path d="M5.500 1v14M10.500 1v14M1 5.500h14M1 10.500h14" stroke="${B}"/>`],
      ortho: [16, 16, `<path d="M1.500 0v14.500H16"/><path d="M2 9.500h4.500V14" stroke="${B}"/>`],
      polar: [16, 16, `<circle cx="8" cy="8" r="6.500" stroke="#dbe9f6"/><path d="M8 8.500h7M8 8l6-5M12 5c1 1 1 2 1 3" stroke="${B}"/>`],
      osnap: [16, 16, `<path d="M7 1.500h7.500v13h-13V7"/><path d="M.5 .5h5v5h-5z" stroke="#ff4b3e"/>`],
      otrack: [16, 16, `<path d="M14 2L1.500 14.500H16"/><path d="M6.500 6.500h3v3h-3z" stroke="${B}" fill="#4a6a8a"/>`],
      ducs: [18, 16, `<path d="M3.500 1v13.500H17M1.500 3l2-2 2 2M15 12.500l2 2-2 2M4 14l6-6"/><path d="M14 0L9 6h3l-2 5 7-7h-3l2-4z" fill="${Y}" stroke="none"/>`],
      dyn: [16, 16, `<path d="M5.500 1v9M1 5.500h9"/><path d="M7.500 9.500h8v4h-8z" stroke="${B}"/>`],
      lwt: [14, 14, `<path d="M1 2.500h12" stroke-width="1"/><path d="M1 7h12" stroke-width="2"/><path d="M1 11.500h12" stroke-width="3"/>`],
      transp: [16, 16, `<rect x="1" y="1" width="14" height="14" rx="2" fill="#333a44" stroke="#2b3038"/><g stroke="#e6e6e6" stroke-dasharray="1 1"><path d="M3 3.500h10M3 5.500h10M3 7.500h10M3 9.500h10M3 11.500h10"/><path d="M4 4.500h9M4 6.500h9M4 8.500h9M4 10.500h9M4 12.500h9"/></g>`],
      cycle: [16, 16, `<path d="M4.500 0v8M1 4.500h7"/><path d="M7 7h4v4H7z" fill="#fff" stroke="none"/><path d="M10.500 9.500h4v4h-4z" stroke="${B}" fill="#303741"/>`],
      annoMon: [18, 18, `<path d="M5.500 4V1.500h10v9H14M9 2v3M12 2v3M6 4.500h9"/><path d="M1.500 5.500h9v9h-9z" stroke="${B}" stroke-dasharray="2 1"/><circle cx="6" cy="10" r="2.500" stroke="${B}"/><path d="M16 11v3h-4M13 12l-2 2 2 2" stroke="${O}" stroke-width="1.300"/>`],
      units: [16, 16, `<path d="M1 1.500h14M1 14.500h14M.5 1v14M15.500 1v14" stroke="${B}"/><text x="8" y="12" text-anchor="middle" fill="${B}" stroke="none" class="font-['Liberation_Sans'] text-[10px]">0.0</text>`],
      annot: [16, 16, `<path d="M8 0L11 9l5 4v3l-6-3H6l-6 3v-3l5-4z" fill="#a9d6ff" stroke="none"/>`],
      annoVis: [16, 16, `<path d="M8 0L10 8l6 6v2l-6-3H6l-6 3v-3l5-4z" fill="#a9d6ff" stroke="none"/><circle cx="13" cy="11" r="3" fill="${Y}" stroke="none"/><path d="M12 15h2" stroke="${Y}"/>`],
      annoAdd: [16, 16, `<path d="M9 1l3 8 4 4v2l-6-2H6l-6 3v-3l5-4z" fill="#a9d6ff" stroke="none"/><path d="M3 1L1 5h2l-1 3" stroke="${W}"/>`],
      isolate: [16, 16, `<path d="M6 9.500H.5v-5H6"/><circle cx="11" cy="4" r="3.500"/><path d="M10 8l4 4-4 4-4-4z"/>`],
      gear: [16, 16, `<circle cx="8" cy="8" r="6" stroke="${B}" stroke-width="3" stroke-dasharray="2.400 2.300"/><circle cx="8" cy="8" r="4" stroke="${B}" stroke-width="2"/>`],
      full: [16, 16, `<path d="M1.500 5V1.500H5M11 1.500h3.500V5M14.500 11v3.500H11M5 14.500H1.500V11M2 2l4 4M14 2l-4 4M14 14l-4-4M2 14l4-4" stroke-width="1.300"/>`],
      menu: [16, 16, `<path d="M1 2.500h14M1 8h14M1 13.500h14" stroke="#6cc0ff" stroke-width="2"/>`],

      punct: [16, 16, `<circle cx="5" cy="6" r="2" stroke="currentColor" stroke-width="1.500"/><path d="M10 8h4v2q0 4-3 5v-3h-1z" fill="currentColor" stroke="none"/>`],
      mic: [16, 16, `<rect x="5" y="0" width="6" height="10" rx="3" fill="currentColor" stroke="none"/><path d="M2.500 6c0 8 11 8 11 0M8 12v2M5 15h6" stroke="currentColor" stroke-width="1.500"/>`],
      keyboard: [16, 14, `<rect x="1" y="2" width="14" height="10" rx="1" stroke="currentColor" stroke-width="1.600"/><path d="M3 5h10M3 7.500h10" stroke="currentColor" stroke-width="1.500" stroke-dasharray="1.500 1"/><path d="M4 10h8" stroke="currentColor"/>`],
      shirt: [16, 16, `<path d="M5 1q3 3 6 0l5 3-2 4-2-1v8H4V7L2 8 0 4z" fill="currentColor" stroke="none"/>`],
      scissors: [16, 16, `<path d="M3 1l8 10M13 1L5 11" stroke="currentColor" stroke-width="1.600"/><circle cx="4" cy="12.500" r="2.300" stroke="currentColor" stroke-width="1.600"/><circle cx="12" cy="12.500" r="2.300" stroke="currentColor" stroke-width="1.600"/>`],
      boxes: [16, 16, `<path d="M1 2h6v6H1zM1 9h6v6H1zM9 9h6v6H9z" fill="currentColor" stroke="none"/><path d="M10 3h4v4h-4z" stroke="currentColor" stroke-width="1.800"/>`],
    };

    function svg(name) {
      const [w, h, body] = icons[name];
      return `<svg class="shrink-0" width="${w}" height="${h}" viewBox="0 0 ${w} ${h}" fill="none" stroke="#f4f6f8" aria-hidden="true">${body}</svg>`;
    }

    document.querySelectorAll("[data-tools]").forEach(el => {
      el.innerHTML = el.dataset.tools.split(" ").map(n =>
        `<button aria-label="${n}" class="w-6 h-[22px] flex items-center justify-center">${svg(n)}</button>`).join("");
    });

    document.querySelectorAll("[data-side]").forEach(el => {
      el.innerHTML = el.dataset.side.split(" ").map(n =>
        `<button aria-label="${n}" class="w-6 h-[23px] flex items-center justify-center">${svg(n)}</button>`).join("");
    });

    document.querySelectorAll("[data-keys]").forEach(el => {
      el.innerHTML = el.dataset.keys.split(" ").map(k =>
        `<button class="h-5 flex items-center justify-center border border-[#9a9a9c] text-[13px] leading-4">${k.replace(/</g, "&lt;")}</button>`).join("");
    });

    document.getElementById("calcTools").innerHTML = "eraser clearHist pasteCmd getPt dist angle inter help".split(" ").map(n =>
      `<button aria-label="${n}" class="size-5 flex items-center justify-center border border-[#9a9a9c]">${svg(n)}</button>`).join("");

    const active = ["polar", "osnap", "otrack", "ducs", "dyn", "transp", "annoMon"];
    document.getElementById("modes").innerHTML = "grid snap ortho polar osnap otrack ducs dyn lwt transp cycle annoMon".split(" ").map(n =>
      `<button aria-label="${n}" class="w-5 h-[21px] flex items-center justify-center ${active.includes(n) ? "bg-[#4f6b88] border border-[#5cb8ff]" : ""}">${svg(n)}</button>`).join("");

    document.getElementById("tray").innerHTML = "annoVis annoAdd isolate gear full menu".split(" ").map(n =>
      `<button aria-label="${n}" class="w-[22px] flex justify-center">${svg(n)}</button>`).join("");

    const swatch = `<i class="inline-block size-2.5 mr-1 bg-white border border-black"></i>随层`;
    const sections = [
      ["基本", "", [["颜色", swatch], ["图层", "0"],
        ["线型", `<i class="inline-block w-[45px] h-px mr-1 align-middle bg-white"></i>随层`], ["线型比例", "1"],
        ["线宽", `<i class="inline-block w-10 h-px mr-[3px] align-middle bg-white"></i>随层`], ["透明度", "ByLayer"], ["厚度", "0"]]],
      ["视图", "text-[#949ca6]", [["中心点 X", "555.8901"], ["中心点 Y", "450.4994"], ["中心点 Z", "0"], ["高度", "607.7385"], ["宽度", "2047.392"]]],
      ["其他", "", [["注释比例", "1:1"], ["打开 UCS...", "是"], ["在原点显...", "是"], ["每个视口...", "是"], ["UCS 名称", ""], ["视觉样式", "二维线框"]]],
    ];
    document.getElementById("props").innerHTML = sections.map(([title, tone, rows]) => `
      <h3 class="mt-[29px] first:mt-[27px] h-5 flex items-center justify-between pl-[5px] pr-1.5 font-bold border-b border-[#dfe3e8]">${title}<button aria-label="折叠">${svg("down")}</button></h3>
      <table class="w-full"><tbody>${rows.map(([k, v]) => `
        <tr class="h-[25px] border-b border-[#56616d]">
          <th class="w-[67px] p-0 pl-[5px] text-left font-normal whitespace-nowrap border-r border-[#56616d]">${k}</th>
          <td class="p-0 pl-[3px] pb-[3px] whitespace-nowrap ${tone}">${v}</td>
        </tr>`).join("")}</tbody></table>`).join("");

    document.getElementById("vars").innerHTML = ["Phi", "dee", "ille", "mee", "nee", "rad"].map(v => `
      <li class="h-5 flex items-center text-[13px]">
        <i class="w-2.5 border-t border-dotted border-[#7b838d]"></i>
        ${v === "Phi" ? `<b class="w-[21px] pl-1 text-[#5cb8ff] font-['Liberation_Serif'] text-[15px]">k</b>` : `<em class="w-[21px] pl-[3px] text-[#5cb8ff] font-['Liberation_Serif'] text-[19px] leading-4">x</em>`}${v}
      </li>`).join("");

    document.getElementById("units").innerHTML = [["单位类型", "长度"], ["转换自", "米"], ["转换到", "米"], ["要转换的值", "0"], ["已转换的值", "0"]].map(([k, v]) => `
      <tr class="h-[21px] border-b border-[#56616d]">
        <th class="w-[100px] p-0 pl-1 font-normal border-r border-[#56616d]"><span class="flex items-center gap-px whitespace-nowrap">${svg("pick")}${k}</span></th>
        <td class="p-0 pl-[5px]">${v}</td>
      </tr>`).join("");

    document.querySelectorAll("[data-icon]").forEach(el => { el.innerHTML = svg(el.dataset.icon); });
  </script>
</body>
</html>
